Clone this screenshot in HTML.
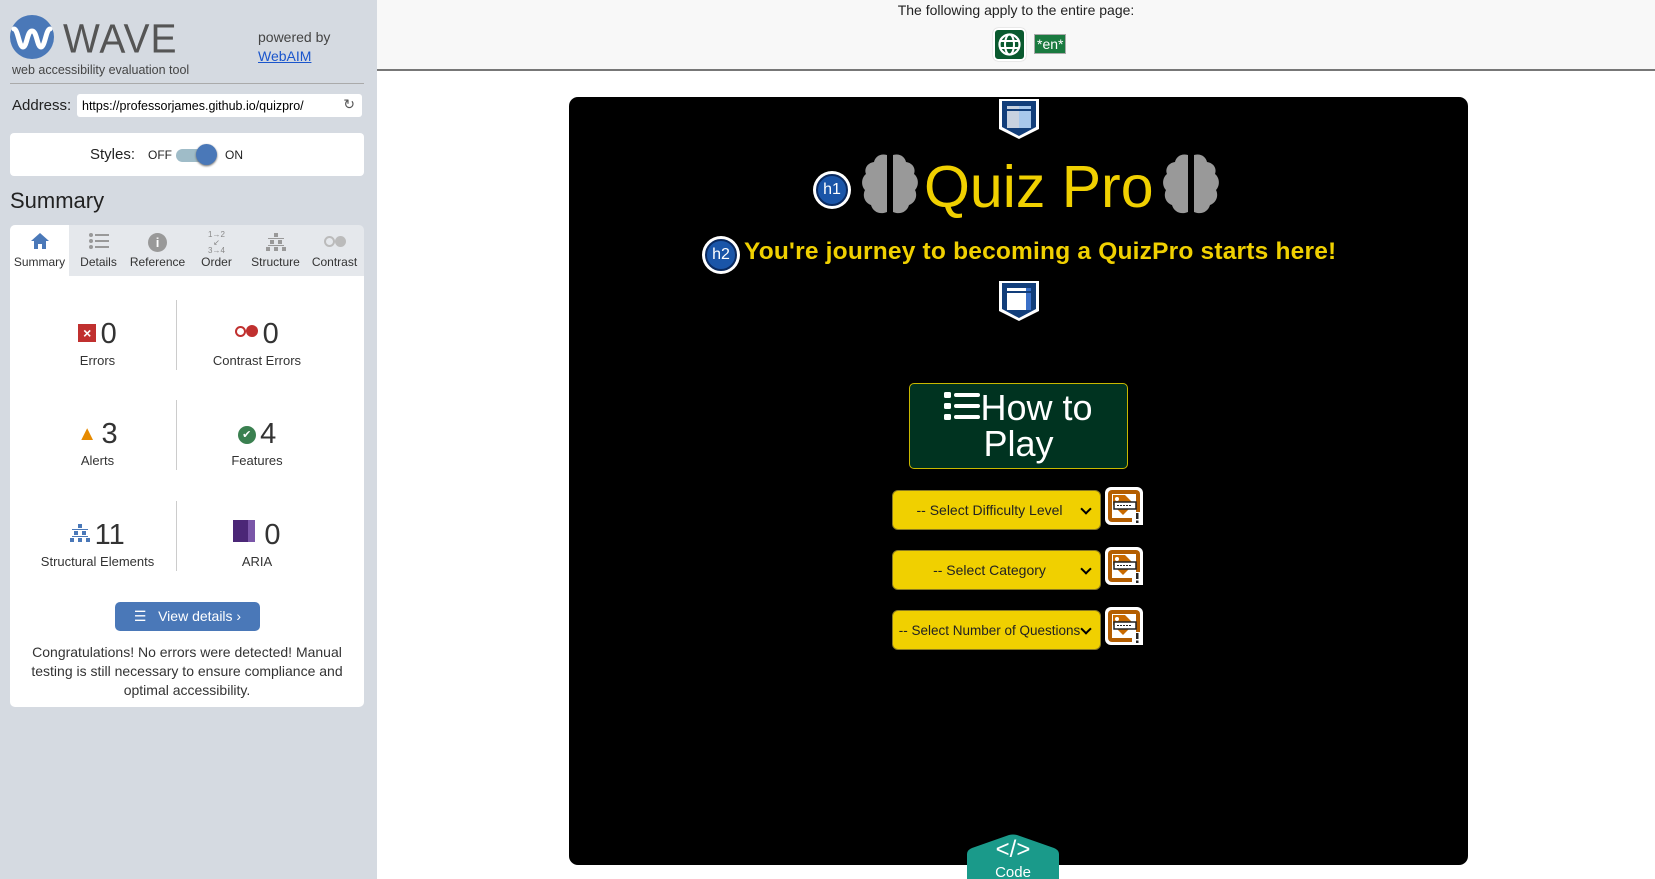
<!DOCTYPE html>
<html><head><meta charset="utf-8"><style>
*{box-sizing:border-box;margin:0;padding:0}
body{width:1655px;height:879px;overflow:hidden;font-family:"Liberation Sans",sans-serif;background:#fff;position:relative}
#side{position:absolute;left:0;top:0;width:377px;height:879px;background:#d5dae1}
.abs{position:absolute}
#top{position:absolute;left:377px;top:0;right:0;height:71px;background:#f8f8f8;border-bottom:2px solid #777}
#panel{position:absolute;left:569px;top:97px;width:899px;height:768px;background:#000;border-radius:9px}
.sel{position:absolute;left:892px;width:209px;height:40px;background:#f0d000;border:1px solid #8a7a20;border-radius:6px;font-size:14px;color:#222;display:flex;align-items:center;justify-content:center;padding-right:14px}
.sel:after{content:"";position:absolute;right:10px;top:14px;width:6px;height:6px;border-right:2px solid #000;border-bottom:2px solid #000;transform:rotate(45deg)}
.lbl{position:absolute;left:1105px;width:38px;height:38px}
.stat{position:absolute;text-align:center;color:#333}
.num{font-size:29px;color:#333}
.lab{font-size:13px;color:#333}
.div{position:absolute;left:176px;width:1px;background:#ccc}
.tab{position:absolute;top:225px;height:51px;text-align:center;font-size:12px;color:#333}
</style></head><body>
<div id="side">
 <svg class="abs" style="left:10px;top:15px" width="44" height="44" viewBox="0 0 44 44"><circle cx="22" cy="22" r="22" fill="#4a78b8"/><path d="M4 14 C8 14 9 32 13 32 C17 32 17 16 22 16 C27 16 27 32 31 32 C35 32 36 14 40 14" stroke="#fff" stroke-width="5" fill="none" stroke-linecap="round"/></svg>
 <div class="abs" style="left:63px;top:18px;font-size:39px;color:#555;letter-spacing:1px;transform:scaleY(1.05)">WAVE</div>
 <div class="abs" style="left:12px;top:63px;font-size:12.5px;color:#444">web accessibility evaluation tool</div>
 <div class="abs" style="left:258px;top:29px;font-size:14px;color:#444">powered by</div>
 <div class="abs" style="left:258px;top:48px;font-size:14px;color:#1a55cc;text-decoration:underline">WebAIM</div>
 <div class="abs" style="left:10px;top:83px;width:354px;height:1px;background:#aaa"></div>
 <div class="abs" style="left:12px;top:97px;font-size:15px;color:#222">Address:</div>
 <div class="abs" style="left:77px;top:94px;width:285px;height:23px;background:#fff;border-radius:3px;font-size:12.5px;padding:5px 5px;color:#000">https://professorjames.github.io/quizpro/<span style="position:absolute;right:7px;top:2px;font-size:14px;color:#555">↻</span></div>
 <div class="abs" style="left:10px;top:133px;width:354px;height:43px;background:#fff;border-radius:4px">
  <div class="abs" style="left:80px;top:13px;font-size:15px;color:#222">Styles:</div>
  <div class="abs" style="left:138px;top:15px;font-size:12px;color:#222">OFF</div>
  <div class="abs" style="left:166px;top:16px;width:36px;height:13px;background:#9fbcc8;border-radius:7px"></div>
  <div class="abs" style="left:186px;top:11px;width:21px;height:21px;background:#4a78b8;border-radius:50%;box-shadow:0 1px 2px #666"></div>
  <div class="abs" style="left:215px;top:15px;font-size:12px;color:#222">ON</div>
 </div>
 <div class="abs" style="left:10px;top:188px;font-size:22px;color:#222">Summary</div>
 <div class="abs" style="left:10px;top:225px;width:354px;height:51px;background:#e5e8ec;border-radius:5px 5px 0 0"></div>
 <div class="abs" style="left:10px;top:225px;width:59px;height:52px;background:#fff;border-radius:5px 0 0 0"></div>
 <div class="tab" style="left:10px;width:59px"><div style="height:30px;padding-top:8px"><svg width="18" height="16" viewBox="0 0 18 16"><path d="M9 0L0 8h3v8h4v-5h4v5h4V8h3z" fill="#4a78b8"/></svg></div>Summary</div>
 <div class="tab" style="left:69px;width:59px"><div style="height:30px;padding-top:8px"><svg width="20" height="16" viewBox="0 0 20 16"><g fill="#999"><circle cx="2" cy="2" r="2"/><circle cx="2" cy="8" r="2"/><circle cx="2" cy="14" r="2"/><rect x="6" y="1" width="14" height="2"/><rect x="6" y="7" width="14" height="2"/><rect x="6" y="13" width="14" height="2"/></g></svg></div>Details</div>
 <div class="tab" style="left:128px;width:59px"><div style="height:30px;padding-top:8px"><span style="display:inline-block;width:19px;height:19px;border-radius:50%;background:#999;color:#fff;font-size:13px;font-weight:bold;line-height:19px">i</span></div>Reference</div>
 <div class="tab" style="left:187px;width:59px"><div style="font-size:8px;color:#888;height:30px;padding-top:6px;line-height:8px">1→2<br>↙<br>3→4</div>Order</div>
 <div class="tab" style="left:246px;width:59px"><div style="height:30px;padding-top:8px"><svg width="20" height="18" viewBox="0 0 20 18"><g fill="#999"><rect x="8" y="0" width="4" height="4"/><rect x="4" y="7" width="4" height="4"/><rect x="12" y="7" width="4" height="4"/><rect x="0" y="14" width="4" height="4"/><rect x="8" y="14" width="4" height="4"/><rect x="16" y="14" width="4" height="4"/><rect x="2" y="5" width="16" height="1"/><rect x="2" y="12" width="16" height="1"/></g></svg></div>Structure</div>
 <div class="tab" style="left:305px;width:59px"><div style="height:30px;padding-top:11px"><span style="display:inline-block;width:11px;height:11px;border:2px solid #bbb;border-radius:50%"></span><span style="display:inline-block;width:11px;height:11px;background:#bbb;border-radius:50%"></span></div>Contrast</div>
 <div class="abs" style="left:10px;top:276px;width:354px;height:431px;background:#fff;border-radius:0 0 5px 5px"></div>
 <div class="div" style="top:300px;height:70px"></div>
 <div class="div" style="top:400px;height:70px"></div>
 <div class="div" style="top:501px;height:70px"></div>
 <div class="stat" style="left:30px;width:135px;top:318px"><span style="display:inline-block;width:18px;height:18px;background:#c0302f;color:#fff;font-size:14px;line-height:18px;vertical-align:5px;font-weight:bold">×</span> <span class="num">0</span><div class="lab" style="margin-top:2px">Errors</div></div>
 <div class="stat" style="left:187px;width:140px;top:318px"><span style="display:inline-block;width:11px;height:11px;border:2px solid #c0302f;border-radius:50%;vertical-align:6px"></span><span style="display:inline-block;width:12px;height:12px;background:#c0302f;border-radius:50%;vertical-align:6px"></span> <span class="num">0</span><div class="lab" style="margin-top:2px">Contrast Errors</div></div>
 <div class="stat" style="left:30px;width:135px;top:418px"><span style="color:#e68a00;font-size:20px;vertical-align:3px">▲</span> <span class="num">3</span><div class="lab" style="margin-top:2px">Alerts</div></div>
 <div class="stat" style="left:187px;width:140px;top:418px"><span style="display:inline-block;width:18px;height:18px;background:#3a8050;border-radius:50%;color:#fff;font-size:11px;line-height:18px;vertical-align:5px">✔</span> <span class="num">4</span><div class="lab" style="margin-top:2px">Features</div></div>
 <div class="stat" style="left:20px;width:155px;top:519px"><svg width="20" height="18" viewBox="0 0 20 18" style="vertical-align:2px"><g fill="#4a78b8"><rect x="8" y="0" width="4" height="4"/><rect x="4" y="7" width="4" height="4"/><rect x="12" y="7" width="4" height="4"/><rect x="0" y="14" width="4" height="4"/><rect x="8" y="14" width="4" height="4"/><rect x="16" y="14" width="4" height="4"/><rect x="2" y="5" width="16" height="1"/><rect x="2" y="12" width="16" height="1"/></g></svg> <span class="num">11</span><div class="lab" style="margin-top:2px">Structural Elements</div></div>
 <div class="stat" style="left:187px;width:140px;top:519px"><span style="display:inline-block;width:22px;height:22px;background:#4b2777;border-right:7px solid #7a56a8;vertical-align:2px"></span> &nbsp;<span class="num">0</span><div class="lab" style="margin-top:2px">ARIA</div></div>
 <div class="abs" style="left:115px;top:602px;width:145px;height:29px;background:#4a78b8;border-radius:5px;color:#fff;font-size:14px;line-height:29px;text-align:center">☰ &nbsp;&nbsp;View details ›</div>
 <div class="abs" style="left:14px;top:643px;width:346px;font-size:14px;line-height:19px;color:#333;text-align:center">Congratulations! No errors were detected! Manual testing is still necessary to ensure compliance and optimal accessibility.</div>
</div>
<div id="top">
 <div class="abs" style="left:0;right:0;top:2px;text-align:center;font-size:14px;color:#222;padding-left:0;">The following apply to the entire page:</div>
 <div class="abs" style="left:616px;top:28px;width:33px;height:33px;background:#0a5a2f;border:2px solid #fff;border-radius:5px;box-shadow:0 0 1px #999"><svg width="29" height="29" viewBox="0 0 29 29"><circle cx="14.5" cy="14.5" r="10" fill="none" stroke="#fff" stroke-width="2.2"/><ellipse cx="14.5" cy="14.5" rx="4.5" ry="10" fill="none" stroke="#fff" stroke-width="2"/><path d="M5 11h19M5 18h19" stroke="#fff" stroke-width="2"/></svg></div>
 <div class="abs" style="left:657px;top:34px;background:#1a7a40;color:#fff;font-size:14px;padding:1px 2px;border:1px solid #aaa">*en*</div>
</div>
<div id="panel"></div>
<svg class="abs" style="left:998px;top:99px" width="42" height="40" viewBox="0 0 42 40"><path d="M1 0h40v30l-20 10l-20-10z" fill="#fff"/><path d="M4 2h34v26l-17 9l-17-9z" fill="#123e7a"/><rect x="9" y="7" width="24" height="22" fill="#c8d2e0"/><rect x="21" y="7" width="12" height="22" fill="#a8c8ec"/><rect x="9" y="10" width="24" height="2" fill="#123e7a"/></svg>
<svg class="abs" style="left:998px;top:281px" width="42" height="40" viewBox="0 0 42 40"><path d="M1 0h40v30l-20 10l-20-10z" fill="#fff"/><path d="M4 2h34v26l-17 9l-17-9z" fill="#123e7a"/><rect x="9" y="7" width="24" height="22" fill="#fff"/><rect x="28" y="7" width="5" height="22" fill="#3a70c8"/><rect x="9" y="10" width="24" height="2" fill="#123e7a"/></svg>
<div class="abs" style="left:813px;top:171px;width:38px;height:38px;border-radius:50%;background:#fff;padding:3px"><div style="width:32px;height:32px;border-radius:50%;background:#1a55a8;border:2px solid #0a2a60;color:#fff;font-size:16px;text-align:center;line-height:28px">h1</div></div>
<svg class="abs" style="left:860px;top:153px" width="60" height="62" viewBox="0 0 60 62"><path d="M27 2C20 0 15 4 14 9C7 10 4 16 6 21C1 25 1 33 5 37C2 43 5 50 11 52C13 59 20 62 27 59z" fill="#999"/><path d="M33 2C40 0 45 4 46 9C53 10 56 16 54 21C59 25 59 33 55 37C58 43 55 50 49 52C47 59 40 62 33 59z" fill="#999"/></svg>
<div class="abs" style="left:924px;top:152px;font-size:59px;color:#f0d000;line-height:70px">Quiz Pro</div>
<svg class="abs" style="left:1161px;top:153px" width="60" height="62" viewBox="0 0 60 62"><path d="M27 2C20 0 15 4 14 9C7 10 4 16 6 21C1 25 1 33 5 37C2 43 5 50 11 52C13 59 20 62 27 59z" fill="#999"/><path d="M33 2C40 0 45 4 46 9C53 10 56 16 54 21C59 25 59 33 55 37C58 43 55 50 49 52C47 59 40 62 33 59z" fill="#999"/></svg>
<div class="abs" style="left:702px;top:236px;width:38px;height:38px;border-radius:50%;background:#fff;padding:3px"><div style="width:32px;height:32px;border-radius:50%;background:#1a55a8;border:2px solid #0a2a60;color:#fff;font-size:16px;text-align:center;line-height:28px">h2</div></div>
<div class="abs" style="left:744px;top:238px;font-size:24.5px;font-weight:bold;color:#f0d000;white-space:nowrap;letter-spacing:0.2px">You're journey to becoming a QuizPro starts here!</div>
<div class="abs" style="left:909px;top:383px;width:219px;height:86px;background:#003320;border:1px solid #c8b800;border-radius:5px;color:#fff;font-size:36px;text-align:center;line-height:36px;padding-top:6px"><svg width="36" height="30" viewBox="0 0 36 30" style="vertical-align:-1px"><g fill="#fff"><rect x="0" y="1" width="7" height="6" rx="1.5"/><rect x="0" y="12" width="7" height="6" rx="1.5"/><rect x="0" y="23" width="7" height="6" rx="1.5"/><rect x="10" y="2" width="26" height="4" rx="2"/><rect x="10" y="13" width="26" height="4" rx="2"/><rect x="10" y="24" width="26" height="4" rx="2"/></g></svg>How to<br>Play</div>
<div class="sel" style="top:490px">-- Select Difficulty Level</div>
<div class="sel" style="top:550px">-- Select Category</div>
<div class="sel" style="top:610px;font-size:13.5px">-- Select Number of Questions</div>
<svg class="lbl" style="top:487px" viewBox="0 0 38 38"><rect width="38" height="38" rx="6" fill="#fff"/><rect x="3" y="3" width="32" height="32" rx="4" fill="#b35d00"/><rect x="7" y="7" width="24" height="24" fill="#fff"/><path d="M8 8h12l9 9l-11 11l-10-10z" fill="#c96a00"/><circle cx="12" cy="12" r="2" fill="#fff"/><rect x="9" y="15" width="22" height="7" fill="#fff" stroke="#222" stroke-width="1.5"/><path d="M12 18.5h14" stroke="#222" stroke-width="1" stroke-dasharray="2 1"/><rect x="27" y="25" width="11" height="13" fill="#fff"/><rect x="31" y="26" width="2.5" height="6" fill="#222"/><rect x="31" y="33.5" width="2.5" height="2.5" fill="#222"/></svg>
<svg class="lbl" style="top:547px" viewBox="0 0 38 38"><rect width="38" height="38" rx="6" fill="#fff"/><rect x="3" y="3" width="32" height="32" rx="4" fill="#b35d00"/><rect x="7" y="7" width="24" height="24" fill="#fff"/><path d="M8 8h12l9 9l-11 11l-10-10z" fill="#c96a00"/><circle cx="12" cy="12" r="2" fill="#fff"/><rect x="9" y="15" width="22" height="7" fill="#fff" stroke="#222" stroke-width="1.5"/><path d="M12 18.5h14" stroke="#222" stroke-width="1" stroke-dasharray="2 1"/><rect x="27" y="25" width="11" height="13" fill="#fff"/><rect x="31" y="26" width="2.5" height="6" fill="#222"/><rect x="31" y="33.5" width="2.5" height="2.5" fill="#222"/></svg>
<svg class="lbl" style="top:607px" viewBox="0 0 38 38"><rect width="38" height="38" rx="6" fill="#fff"/><rect x="3" y="3" width="32" height="32" rx="4" fill="#b35d00"/><rect x="7" y="7" width="24" height="24" fill="#fff"/><path d="M8 8h12l9 9l-11 11l-10-10z" fill="#c96a00"/><circle cx="12" cy="12" r="2" fill="#fff"/><rect x="9" y="15" width="22" height="7" fill="#fff" stroke="#222" stroke-width="1.5"/><path d="M12 18.5h14" stroke="#222" stroke-width="1" stroke-dasharray="2 1"/><rect x="27" y="25" width="11" height="13" fill="#fff"/><rect x="31" y="26" width="2.5" height="6" fill="#222"/><rect x="31" y="33.5" width="2.5" height="2.5" fill="#222"/></svg>
<svg class="abs" style="left:967px;top:834px" width="92" height="45" viewBox="0 0 92 45"><path d="M0 45V20Q0 16 5 14L42 1Q46 0 50 1L87 14Q92 16 92 20V45z" fill="#1a9a8a"/><text x="46" y="23" fill="#fff" font-size="24" text-anchor="middle" font-family="Liberation Sans">&lt;/&gt;</text><text x="46" y="43" fill="#fff" font-size="15" text-anchor="middle" font-family="Liberation Sans">Code</text></svg>
</body></html>
